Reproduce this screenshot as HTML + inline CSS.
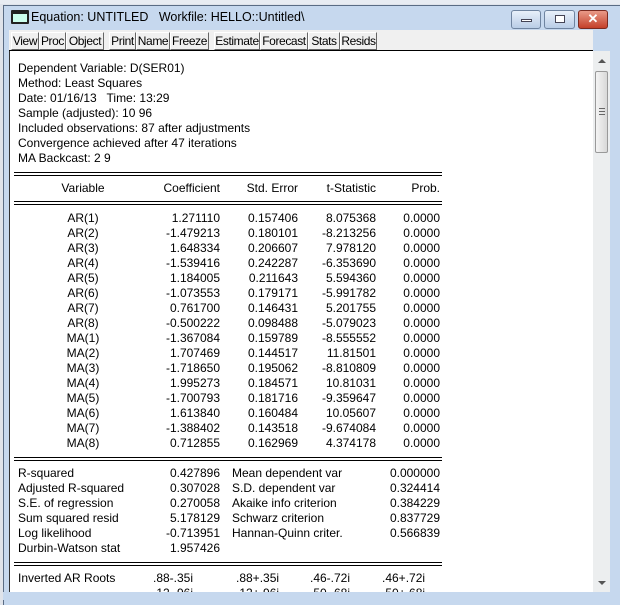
<!DOCTYPE html>
<html><head><style>
*{margin:0;padding:0;box-sizing:border-box}
body{width:620px;height:600px;overflow:hidden;background:#dfe3ea;font-family:"Liberation Sans",Arial,sans-serif;font-size:12px;color:#000;position:relative}
.frame{position:absolute;left:3px;top:5px;width:620px;height:600px;background:#c6d8ee;border:1px solid #5a6c84;border-right:none;border-bottom:none}
.title{position:absolute;left:31px;top:10px;font-size:12.5px;color:#000}
.ico{position:absolute;left:11px;top:10px;width:18px;height:14px;border:2px solid #222;background:#cfe;border-top-width:4px;border-radius:1px}
.wb{position:absolute;top:10px;height:19px;border:1px solid #6f84a0;border-radius:3px;background:linear-gradient(#e8f0fa,#b9cde6)}
.tb{position:absolute;left:9px;top:30px;width:584px;height:21px;background:#f0f0f0;border-bottom:1px solid #000}
.btn{position:absolute;top:2px;height:18px;border:1px solid #666;border-top-color:#fff;border-left-color:#fff;background:#f0f0f0;font-size:12px;line-height:16px;text-align:center;letter-spacing:-0.4px;white-space:nowrap;overflow:hidden}
.content{position:absolute;left:9px;top:51px;width:584px;height:541px;background:#fff;border-left:1px solid #333;overflow:hidden}
.sb{position:absolute;left:593px;top:51px;width:17px;height:541px;background:#eceeef}
.thumb{position:absolute;left:2px;top:20px;width:13px;height:82px;border:1px solid #999;border-radius:2px;background:linear-gradient(90deg,#f4f4f4,#d8d8d8)}
.t{position:absolute;white-space:nowrap}
.r{position:absolute;white-space:nowrap;text-align:right}
.c{position:absolute;white-space:nowrap;text-align:center}
.dl{position:absolute;left:4px;width:428px;height:4px;border-top:1px solid #000;border-bottom:1px solid #000}
</style></head><body>
<div style="position:absolute;left:0;top:0;width:620px;height:4px;background:#e8ecf2"></div>
<div class="frame"></div>
<div class="ico"></div>
<div class="title">Equation: UNTITLED &nbsp; Workfile: HELLO::Untitled\</div>
<div class="wb" style="left:511px;width:30px"><div style="position:absolute;left:9px;top:8px;width:11px;height:3px;background:#fff;border:1px solid #445"></div></div>
<div class="wb" style="left:544px;width:31px"><div style="position:absolute;left:10px;top:4px;width:10px;height:8px;border:1px solid #445;background:#fff"></div></div>
<div class="wb" style="left:578px;width:30px;background:linear-gradient(#e99a88,#c4402a);border-color:#7a2a20;color:#fff;font-weight:bold;text-align:center;line-height:16px;font-size:13px">✕</div>
<div class="tb">
<div class="btn" style="left:2px;width:28px">View</div>
<div class="btn" style="left:30px;width:27px">Proc</div>
<div class="btn" style="left:57px;width:38px">Object</div>
<div class="btn" style="left:100px;width:27px">Print</div>
<div class="btn" style="left:127px;width:34px">Name</div>
<div class="btn" style="left:161px;width:39px">Freeze</div>
<div class="btn" style="left:205px;width:46px">Estimate</div>
<div class="btn" style="left:251px;width:48px">Forecast</div>
<div class="btn" style="left:299px;width:32px">Stats</div>
<div class="btn" style="left:331px;width:37px">Resids</div>
</div>
<div class="content">
<div class="t" style="left:8px;top:10px;line-height:15px">Dependent Variable: D(SER01)<br>Method: Least Squares<br>Date: 01/16/13 &nbsp; Time: 13:29<br>Sample (adjusted): 10 96<br>Included observations: 87 after adjustments<br>Convergence achieved after 47 iterations<br>MA Backcast: 2 9</div>
<div class="dl" style="top:121px"></div>
<div class="c" style="left:33px;width:80px;top:130px">Variable</div>
<div class="r" style="left:130px;width:80px;top:130px">Coefficient</div>
<div class="r" style="left:208px;width:80px;top:130px">Std. Error</div>
<div class="r" style="left:286px;width:80px;top:130px">t-Statistic</div>
<div class="r" style="left:350px;width:80px;top:130px">Prob.</div>
<div class="dl" style="top:150px"></div>
<div class="c" style="left:33px;width:80px;top:160px;line-height:15px">AR(1)<br>AR(2)<br>AR(3)<br>AR(4)<br>AR(5)<br>AR(6)<br>AR(7)<br>AR(8)<br>MA(1)<br>MA(2)<br>MA(3)<br>MA(4)<br>MA(5)<br>MA(6)<br>MA(7)<br>MA(8)</div>
<div class="r" style="left:130px;width:80px;top:160px;line-height:15px">1.271110<br>-1.479213<br>1.648334<br>-1.539416<br>1.184005<br>-1.073553<br>0.761700<br>-0.500222<br>-1.367084<br>1.707469<br>-1.718650<br>1.995273<br>-1.700793<br>1.613840<br>-1.388402<br>0.712855</div>
<div class="r" style="left:208px;width:80px;top:160px;line-height:15px">0.157406<br>0.180101<br>0.206607<br>0.242287<br>0.211643<br>0.179171<br>0.146431<br>0.098488<br>0.159789<br>0.144517<br>0.195062<br>0.184571<br>0.181716<br>0.160484<br>0.143518<br>0.162969</div>
<div class="r" style="left:286px;width:80px;top:160px;line-height:15px">8.075368<br>-8.213256<br>7.978120<br>-6.353690<br>5.594360<br>-5.991782<br>5.201755<br>-5.079023<br>-8.555552<br>11.81501<br>-8.810809<br>10.81031<br>-9.359647<br>10.05607<br>-9.674084<br>4.374178</div>
<div class="r" style="left:350px;width:80px;top:160px;line-height:15px">0.0000<br>0.0000<br>0.0000<br>0.0000<br>0.0000<br>0.0000<br>0.0000<br>0.0000<br>0.0000<br>0.0000<br>0.0000<br>0.0000<br>0.0000<br>0.0000<br>0.0000<br>0.0000</div>
<div class="dl" style="top:406px"></div>
<div class="t" style="left:8px;top:415px;line-height:15px">R-squared<br>Adjusted R-squared<br>S.E. of regression<br>Sum squared resid<br>Log likelihood<br>Durbin-Watson stat</div>
<div class="r" style="left:130px;width:80px;top:415px;line-height:15px">0.427896<br>0.307028<br>0.270058<br>5.178129<br>-0.713951<br>1.957426</div>
<div class="t" style="left:222px;top:415px;line-height:15px">Mean dependent var<br>S.D. dependent var<br>Akaike info criterion<br>Schwarz criterion<br>Hannan-Quinn criter.</div>
<div class="r" style="left:350px;width:80px;top:415px;line-height:15px">0.000000<br>0.324414<br>0.384229<br>0.837729<br>0.566839</div>
<div class="dl" style="top:511px"></div>
<div class="t" style="left:8px;top:520px">Inverted AR Roots</div>
<div class="t" style="left:143px;top:520px;line-height:15px">.88-.35i<br>.12-.96i</div>
<div class="t" style="left:226px;top:520px;line-height:15px">.88+.35i<br>.12+.96i</div>
<div class="t" style="left:300px;top:520px;line-height:15px">.46-.72i<br>.50-.68i</div>
<div class="t" style="left:372px;top:520px;line-height:15px">.46+.72i<br>.50+.68i</div>
</div>
<div class="sb"><div style="position:absolute;left:5px;top:8px;width:0;height:0;border-left:4px solid transparent;border-right:4px solid transparent;border-bottom:4px solid #555"></div><div class="thumb"><div style="position:absolute;left:3px;top:36px;width:6px;height:7px;border-top:1px solid #666;border-bottom:1px solid #666"><div style="margin-top:2px;border-top:1px solid #666"></div></div></div><div style="position:absolute;left:5px;top:530px;width:0;height:0;border-left:4px solid transparent;border-right:4px solid transparent;border-top:4px solid #555"></div></div>
<div style="position:absolute;left:3px;top:592px;width:617px;height:8px;background:#c6d8ee"></div>
</body></html>
